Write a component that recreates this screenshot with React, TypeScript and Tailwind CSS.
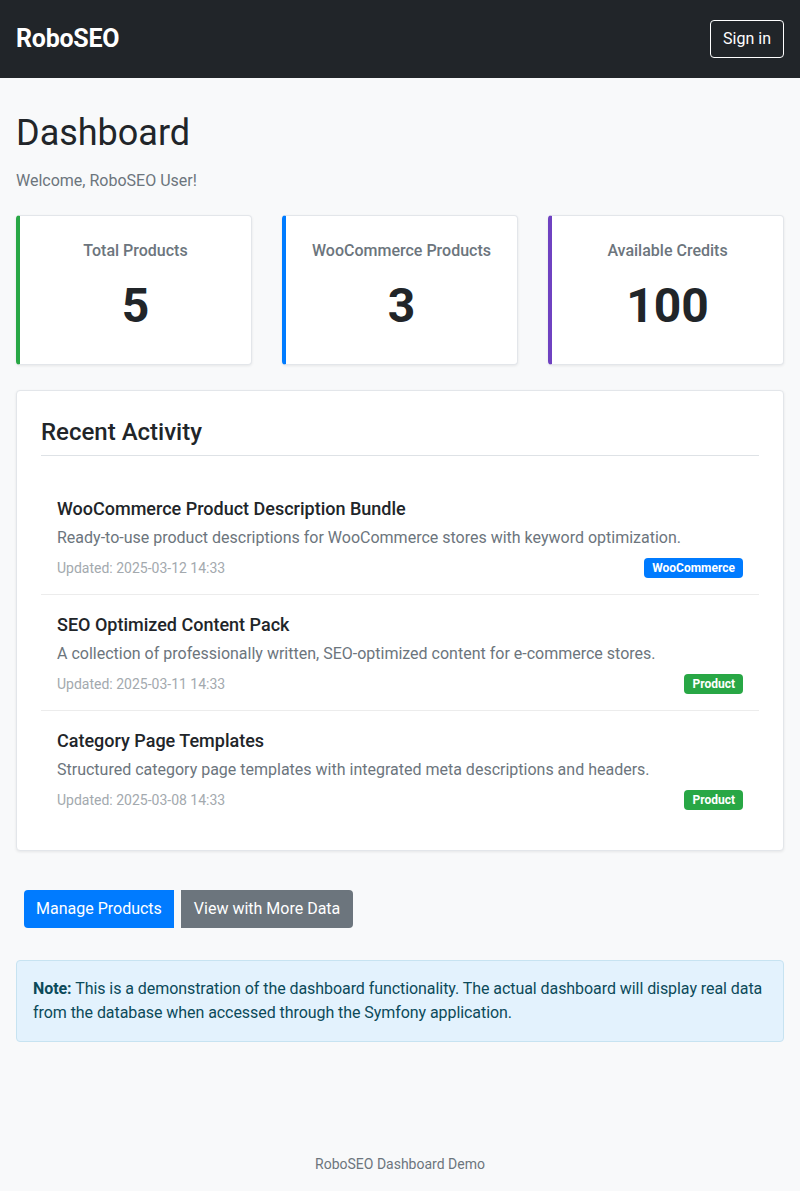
const stats = [
  { label: 'Total Products', value: '5', bar: 'border-l-[#28a745]' },
  { label: 'WooCommerce Products', value: '3', bar: 'border-l-[#007bff]' },
  { label: 'Available Credits', value: '100', bar: 'border-l-[#6f42c1]' },
];

const activity = [
  {
    title: 'WooCommerce Product Description Bundle',
    text: 'Ready-to-use product descriptions for WooCommerce stores with keyword optimization.',
    updated: 'Updated: 2025-03-12 14:33',
    badge: 'WooCommerce',
    badgeColor: 'bg-[#007bff]',
  },
  {
    title: 'SEO Optimized Content Pack',
    text: 'A collection of professionally written, SEO-optimized content for e-commerce stores.',
    updated: 'Updated: 2025-03-11 14:33',
    badge: 'Product',
    badgeColor: 'bg-[#28a745]',
  },
  {
    title: 'Category Page Templates',
    text: 'Structured category page templates with integrated meta descriptions and headers.',
    updated: 'Updated: 2025-03-08 14:33',
    badge: 'Product',
    badgeColor: 'bg-[#28a745]',
  },
];

export default function App() {
  return (
    <div className="flex min-h-[1191px] flex-col bg-[#f8f9fa] font-['Roboto',sans-serif] text-[#212529]">
      <header className="flex h-[78px] items-center justify-between bg-[#212529] px-4">
        <span className="text-[25px] font-bold tracking-[-0.01em] text-white">RoboSEO</span>
        <button className="h-[38px] rounded-[4px] border border-white px-3 text-[16px] text-white">Sign in</button>
      </header>

      <main className="px-4 pt-[31px]">
        <h1 className="text-[36px] font-normal leading-[48px]">Dashboard</h1>
        <p className="mt-[12px] text-[16px] leading-6 text-[#6c757d]">Welcome, RoboSEO User!</p>

        <div className="mt-[22px] grid grid-cols-3 gap-[30px]">
          {stats.map((s) => (
            <div
              key={s.label}
              className={`flex h-[150px] flex-col items-center rounded-[4px] border border-[#e3e6ea] border-l-4 bg-white pt-[24px] shadow-[0_1px_3px_rgba(0,0,0,0.08)] ${s.bar}`}
            >
              <div className="text-[16px] font-medium leading-[22px] text-[#6c757d]">{s.label}</div>
              <div className="mt-[15px] text-[48px] font-bold leading-[58px]">{s.value}</div>
            </div>
          ))}
        </div>

        <section className="mt-[25px] rounded-[4px] border border-[#e3e6ea] bg-white px-6 pb-6 pt-[25px] shadow-[0_1px_3px_rgba(0,0,0,0.08)]">
          <h2 className="border-b border-[#dee2e6] pb-[7px] text-[24px] font-medium leading-[32px]">Recent Activity</h2>
          <ul className="mt-[23px]">
            {activity.map((a, i) => (
              <li key={a.title} className={`px-4 pb-4 pt-[18px] ${i < activity.length - 1 ? 'border-b border-[#ececec]' : ''}`}>
                <div className="text-[18px] font-medium leading-6">{a.title}</div>
                <p className="mt-[5px] text-[16px] leading-6 text-[#6c757d]">{a.text}</p>
                <div className="mt-[8px] flex h-[20px] items-center justify-between">
                  <span className="text-[14px] leading-[20px] text-[#a3a9ae]">{a.updated}</span>
                  <span className={`flex h-[20px] items-center rounded-[4px] px-[8px] text-[12px] font-bold text-white ${a.badgeColor}`}>
                    {a.badge}
                  </span>
                </div>
              </li>
            ))}
          </ul>
        </section>

        <div className="mt-[39px] flex gap-[7px] pl-2">
          <button className="h-[38px] rounded-l-[4px] bg-[#007bff] px-[12px] text-[16px] text-white">Manage Products</button>
          <button className="h-[38px] rounded-r-[4px] bg-[#6c757d] px-[13px] text-[16px] text-white">View with More Data</button>
        </div>

        <div className="mt-[32px] rounded-[4px] border border-[#c7e3f1] bg-[#e3f2fd] px-4 py-4 text-[16px] leading-6 tracking-[-0.004em] text-[#0c4a5a]">
          <strong className="font-bold">Note:</strong> This is a demonstration of the dashboard functionality. The actual dashboard will display real data from the database when accessed through the Symfony application.
        </div>
      </main>

      <footer className="mt-auto pb-[16px] text-center text-[14px] leading-[21px] text-[#6c757d]">RoboSEO Dashboard Demo</footer>
    </div>
  );
}
